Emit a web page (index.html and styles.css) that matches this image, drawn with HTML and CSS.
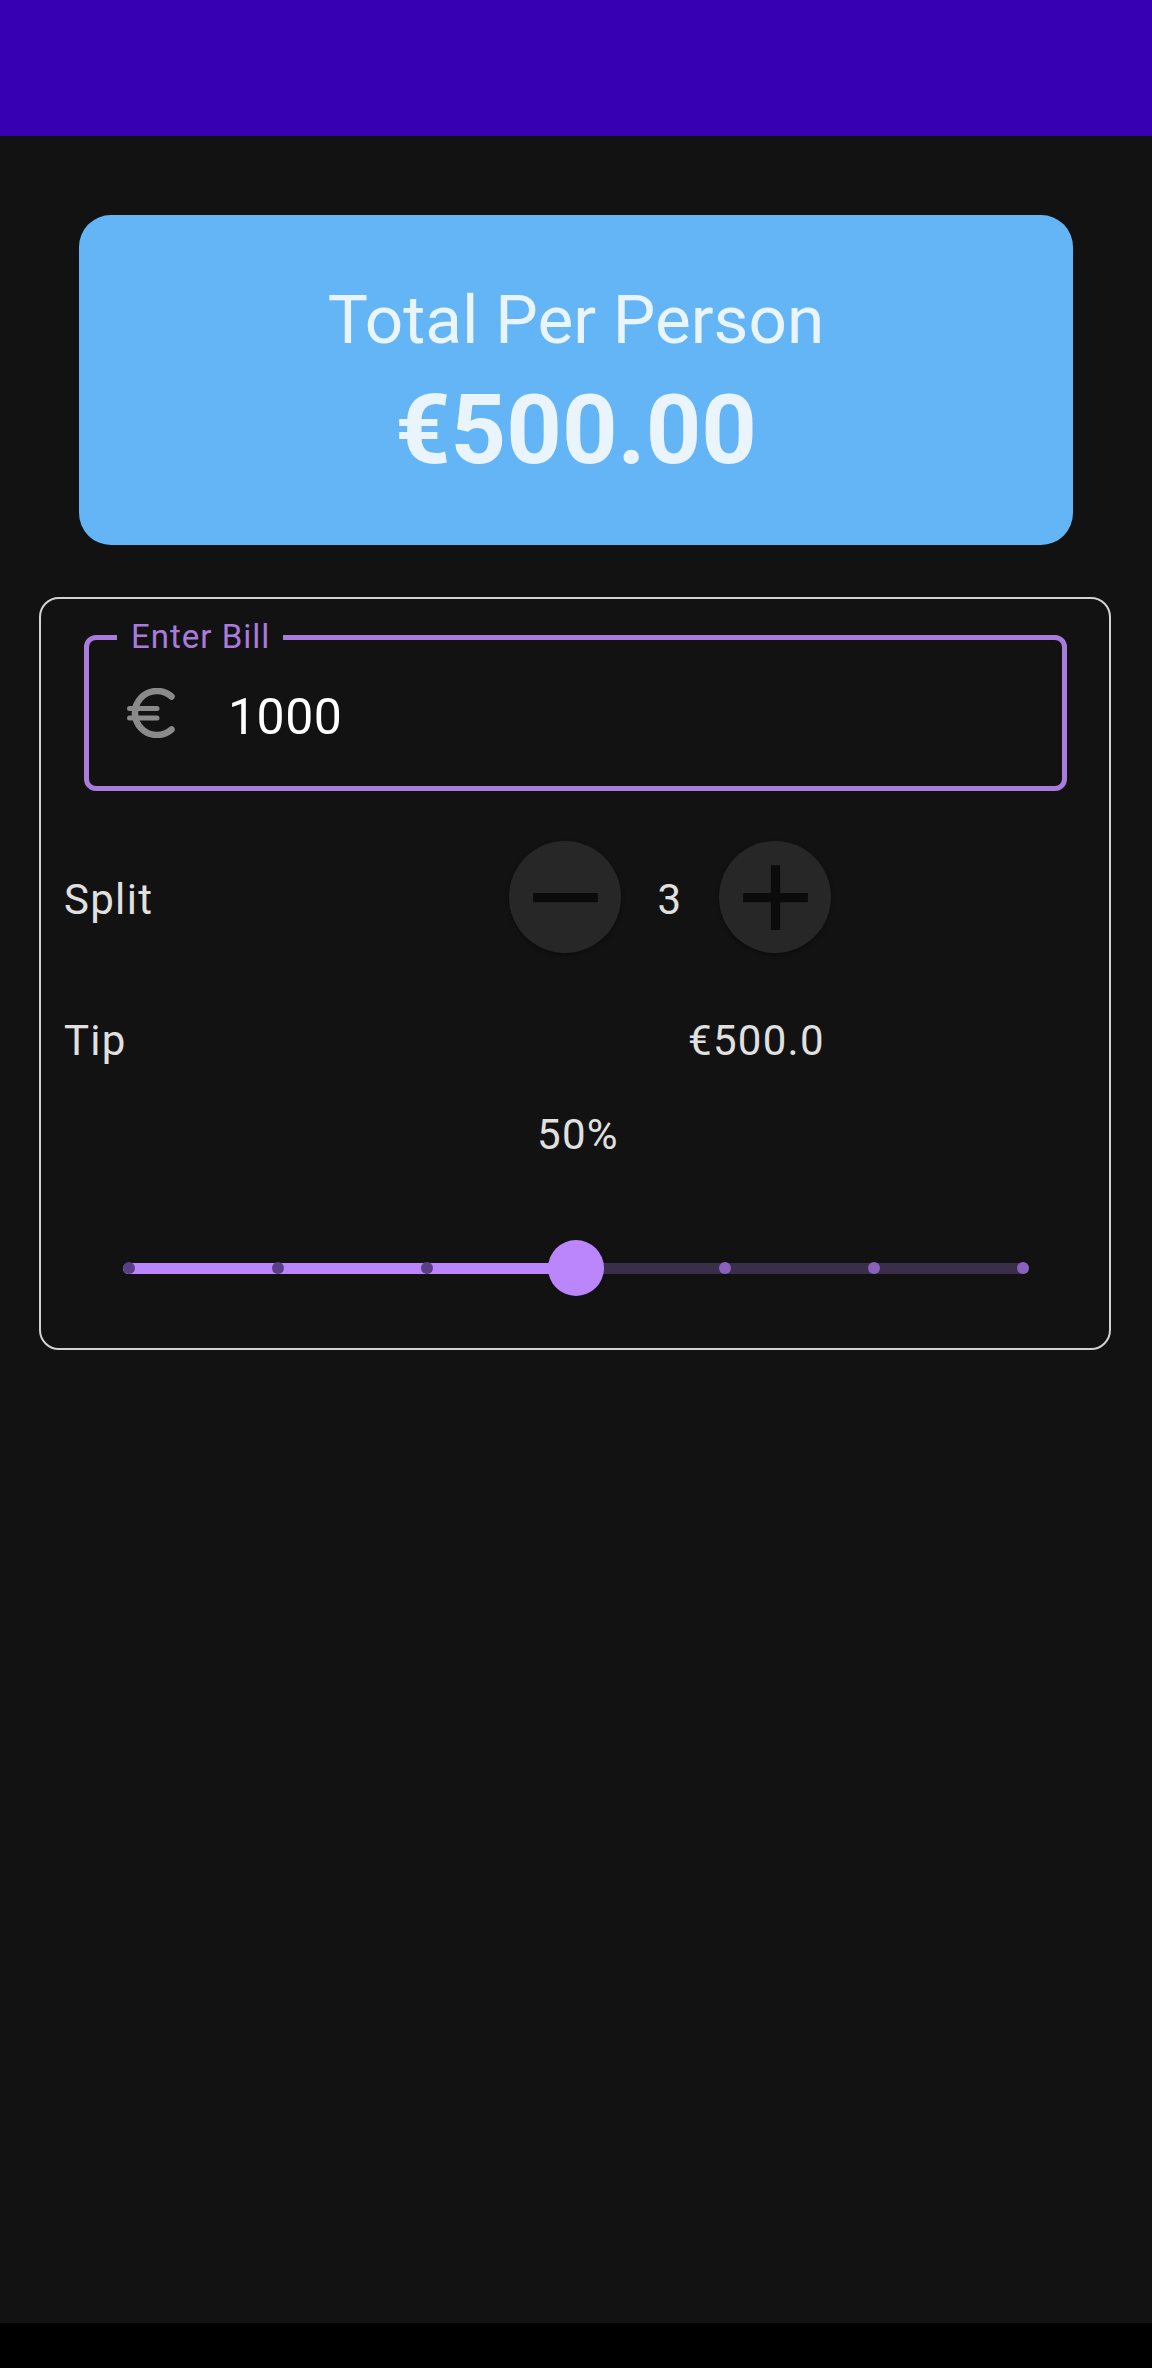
FILE: index.html
```html
<!DOCTYPE html>
<html lang="en">
<head>
<meta charset="utf-8">
<title>Tip Calculator</title>
<link rel="stylesheet" href="styles.css">
</head>
<body>
<div class="screen">
  <div class="topbar"></div>
  <main class="content">
    <section class="total-card">
      <div class="total-label">Total Per Person</div>
      <div class="total-amount">€500.00</div>
    </section>
    <section class="panel">
      <div class="field">
        <span class="field-label">Enter Bill</span>
        <svg class="euro" width="50" height="50" viewBox="0 0 50 50" aria-hidden="true">
          <path d="M45.5 8.5 A22 22 0 1 0 45.5 41.5" fill="none" stroke="currentColor" stroke-width="6.5" stroke-linecap="round"/>
          <path d="M3.5 20.5 H31 M3.5 30 H31" fill="none" stroke="currentColor" stroke-width="5" stroke-linecap="round"/>
        </svg>
        <span class="field-value">1000</span>
      </div>
      <div class="row split-row">
        <span class="row-label split-label">Split</span>
        <button class="round-btn" type="button" aria-label="Decrease">
          <svg width="111" height="111" viewBox="0 0 24 24"><path d="M19 13H5v-2h14v2z" fill="currentColor"/></svg>
        </button>
        <span class="count">3</span>
        <button class="round-btn" type="button" aria-label="Increase">
          <svg width="111" height="111" viewBox="0 0 24 24"><path d="M19 13h-6v6h-2v-6H5v-2h6V5h2v6h6v2z" fill="currentColor"/></svg>
        </button>
      </div>
      <div class="row tip-row">
        <span class="row-label tip-label">Tip</span>
        <span class="tip-value">€500.0</span>
      </div>
      <div class="percent">50%</div>
      <div class="slider">
        <div class="track">
          <div class="fill" style="width: 50%"></div>
          <span class="tick tick-on"></span>
          <span class="tick tick-on"></span>
          <span class="tick tick-on"></span>
          <span class="tick tick-hidden"></span>
          <span class="tick tick-off"></span>
          <span class="tick tick-off"></span>
          <span class="tick tick-off"></span>
        </div>
        <div class="thumb" style="left: 50%"></div>
      </div>
    </section>
  </main>
  <div class="navbar"></div>
</div>
</body>
</html>
```

FILE: styles.css
```css
html, body {
  margin: 0;
  padding: 0;
  background: #121212;
}

body {
  font-family: Roboto, "Noto Sans", "Liberation Sans", sans-serif;
}

.screen {
  display: flex;
  flex-direction: column;
  min-height: 2368px;
}

.topbar {
  height: 136px;
  background: #3700B3;
  flex: none;
}

.content {
  flex: 1;
  padding-top: 79px;
}

.total-card {
  margin: 0 79px;
  height: 330px;
  box-sizing: border-box;
  border-radius: 32px;
  background: #64B5F6;
  padding-top: 65px;
  display: flex;
  flex-direction: column;
  align-items: center;
  gap: 14px;
  color: #EAF4FD;
}

.total-label {
  font-size: 67.5px;
  line-height: 80px;
  font-weight: 400;
}

.total-amount {
  font-size: 97px;
  line-height: 112px;
  font-weight: 700;
}

.panel {
  margin: 52px 41px 0 39px;
  border: 2px solid #D2D2D2;
  border-radius: 20px;
  padding-bottom: 52px;
  display: flex;
  flex-direction: column;
}

.field {
  position: relative;
  margin: 36px 42px 0 43px;
  height: 156px;
  box-sizing: border-box;
  border: 5px solid #A97BDC;
  border-radius: 12px;
  display: flex;
  align-items: center;
  padding-left: 37px;
}

.field-label {
  position: absolute;
  top: -22px;
  left: 28px;
  padding: 0 13px 0 14px;
  background: #121212;
  color: #A97BDC;
  font-size: 33px;
  line-height: 38px;
  letter-spacing: 1px;
}

.euro {
  color: #8A8A8A;
  flex: none;
}

.field-value {
  margin-left: 52px;
  padding-top: 8px;
  font-size: 50px;
  line-height: 60px;
  letter-spacing: 0.5px;
  color: #FFFFFF;
}

.row {
  display: flex;
  align-items: center;
  padding-left: 23px;
  color: #E0E0E0;
  font-size: 42px;
  line-height: 50px;
  letter-spacing: 1.3px;
}

.split-row {
  margin-top: 50px;
  height: 112px;
}

.split-label {
  width: 445px;
  padding-top: 5px;
}

.round-btn {
  width: 112px;
  height: 112px;
  border: none;
  border-radius: 50%;
  background: #272727;
  color: #0B0B0B;
  padding: 0;
  display: flex;
  align-items: center;
  justify-content: center;
  box-shadow: 0 2px 4px rgba(0, 0, 0, 0.35);
}

.count {
  width: 98px;
  text-align: center;
  padding-top: 5px;
}

.tip-row {
  margin-top: 63px;
  height: 50px;
}

.tip-label {
  width: 624px;
}

.percent {
  margin-top: 44px;
  padding-left: 6px;
  text-align: center;
  color: #E0E0E0;
  font-size: 42px;
  line-height: 50px;
  letter-spacing: 1.3px;
}

.slider {
  position: relative;
  margin: 80px 0 0 82px;
  width: 906px;
  height: 56px;
  display: flex;
  align-items: center;
}

.track {
  position: relative;
  width: 100%;
  height: 11px;
  border-radius: 6px;
  background: #3B2E4A;
  display: flex;
  justify-content: space-between;
  align-items: center;
}

.fill {
  position: absolute;
  left: 0;
  top: 0;
  height: 100%;
  background: #BB86FC;
  border-radius: 6px 0 0 6px;
}

.tick {
  position: relative;
  width: 12px;
  height: 12px;
  border-radius: 50%;
}

.tick-on {
  background: #5B3F85;
}

.tick-off {
  background: #8A62BE;
}

.tick-hidden {
  background: transparent;
}

.thumb {
  position: absolute;
  top: 0;
  width: 56px;
  height: 56px;
  margin-left: -28px;
  border-radius: 50%;
  background: #BB86FC;
}

.navbar {
  height: 45px;
  background: #000000;
  flex: none;
}
```
